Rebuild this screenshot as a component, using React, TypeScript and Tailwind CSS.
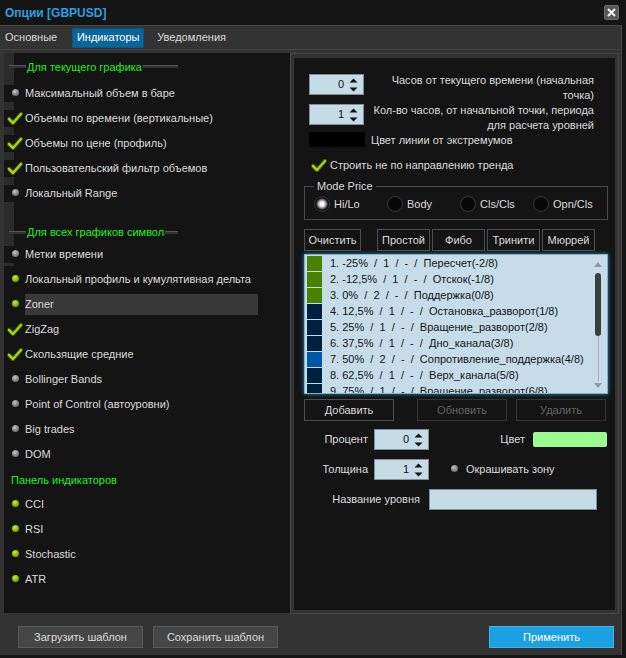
import clsx from 'clsx';

type Mark = 'check' | 'dot' | 'green';

interface Row {
  label: string;
  mark: Mark;
  active?: boolean;
}

const currentChart: Row[] = [
  { label: 'Максимальный объем в баре', mark: 'dot' },
  { label: 'Объемы по времени (вертикальные)', mark: 'check' },
  { label: 'Объемы по цене (профиль)', mark: 'check' },
  { label: 'Пользовательский фильтр объемов', mark: 'check' },
  { label: 'Локальный Range', mark: 'dot' },
];

const allCharts: Row[] = [
  { label: 'Метки времени', mark: 'dot' },
  { label: 'Локальный профиль и кумулятивная дельта', mark: 'green' },
  { label: 'Zoner', mark: 'green', active: true },
  { label: 'ZigZag', mark: 'check' },
  { label: 'Скользящие средние', mark: 'check' },
  { label: 'Bollinger Bands', mark: 'dot' },
  { label: 'Point of Control (автоуровни)', mark: 'dot' },
  { label: 'Big trades', mark: 'dot' },
  { label: 'DOM', mark: 'dot' },
];

const panel: Row[] = [
  { label: 'CCI', mark: 'green' },
  { label: 'RSI', mark: 'green' },
  { label: 'Stochastic', mark: 'green' },
  { label: 'ATR', mark: 'green' },
];

const levels = [
  { text: '1. -25%  /  1  /  -  /  Пересчет(-2/8)', color: 'bg-[#478200]' },
  { text: '2. -12,5%  /  1  /  -  /  Отскок(-1/8)', color: 'bg-[#478200]' },
  { text: '3. 0%  /  2  /  -  /  Поддержка(0/8)', color: 'bg-[#478200]' },
  { text: '4. 12,5%  /  1  /  -  /  Остановка_разворот(1/8)', color: 'bg-[#00203f]' },
  { text: '5. 25%  /  1  /  -  /  Вращение_разворот(2/8)', color: 'bg-[#00203f]' },
  { text: '6. 37,5%  /  1  /  -  /  Дно_канала(3/8)', color: 'bg-[#00203f]' },
  { text: '7. 50%  /  2  /  -  /  Сопротивление_поддержка(4/8)', color: 'bg-[#0057a8]' },
  { text: '8. 62,5%  /  1  /  -  /  Верх_канала(5/8)', color: 'bg-[#00203f]' },
  { text: '9. 75%  /  1  /  -  /  Вращение_разворот(6/8)', color: 'bg-[#00203f]' },
];

function Check() {
  return (
    <svg width="16" height="13" viewBox="0 0 16 13">
      <path d="M2 7 L6 11 L14 2" fill="none" stroke="#2f3d00" strokeWidth="4.5" strokeLinecap="round" strokeLinejoin="round" />
      <path d="M2 7 L6 11 L14 2" fill="none" stroke="#a5d40a" strokeWidth="2.6" strokeLinecap="round" strokeLinejoin="round" />
    </svg>
  );
}

function Dot({ green }: { green?: boolean }) {
  return (
    <span
      className={clsx(
        'mb-[2px] block h-[7px] w-[7px] rounded-full',
        green
          ? 'bg-[radial-gradient(circle_at_40%_35%,#c4ee3a_0%,#8cc400_45%,#4d7300_100%)]'
          : 'bg-[radial-gradient(circle_at_40%_35%,#c8c8c8_0%,#8c8c8c_45%,#4e4e4e_100%)]',
      )}
    />
  );
}

function MarkIcon({ mark }: { mark: Mark }) {
  return (
    <span className="flex w-[21px] shrink-0 items-center justify-center pl-[1px]">
      {mark === 'check' ? <Check /> : <Dot green={mark === 'green'} />}
    </span>
  );
}

function ItemRow({ row, strip }: { row: Row; strip?: boolean }) {
  return (
    <div
      className={clsx(
        'flex h-[25px] items-center pt-[1px]',
        strip && 'bg-[linear-gradient(to_right,#2b2b2b_10px,#141414_10px)]',
      )}
    >
      <div className="flex h-[17px] w-full items-center bg-[#141414]">
        <MarkIcon mark={row.mark} />
        <span
          className={clsx(
            'flex h-[21px] w-[233px] items-center whitespace-nowrap',
            row.active && 'bg-[#393939]',
          )}
        >
          {row.label}
        </span>
      </div>
    </div>
  );
}

function GroupHeader({ title, className }: { title: string; className?: string }) {
  return (
    <div className={clsx('flex bg-[linear-gradient(to_right,#2b2b2b_10px,#141414_10px)]', className)}>
      <div className="ml-[5px] flex w-[169px] items-center">
        <span className="h-[3px] w-[17px] shrink-0 border-t border-[#575757] bg-[#333]" />
        <span className="max-w-[139px] overflow-hidden whitespace-nowrap px-[1px] leading-[14px] text-[#22f022]">
          {title}
        </span>
        <span className="h-[3px] min-w-[13px] flex-1 border-t border-[#575757] bg-[#333]" />
      </div>
    </div>
  );
}

function Arrows() {
  return (
    <svg width="9" height="14" viewBox="0 0 9 14" className="ml-[5px] shrink-0">
      <path d="M0.5 4.5 L4.5 0.5 L8.5 4.5 Z" fill="#111" />
      <path d="M0.5 9.5 L8.5 9.5 L4.5 13.5 Z" fill="#111" />
    </svg>
  );
}

function Spin({ value, className }: { value: string; className?: string }) {
  return (
    <div
      className={clsx(
        'flex h-[21px] w-[55px] shrink-0 items-center justify-end border border-[#7d9099] bg-[#c5dbe6] pr-[5px] text-[#111]',
        className,
      )}
    >
      <span>{value}</span>
      <Arrows />
    </div>
  );
}

function Radio({ label, checked, className }: { label: string; checked?: boolean; className?: string }) {
  return (
    <div className={clsx('flex items-center', className)}>
      <span
        className={clsx(
          'block h-[16px] w-[16px] rounded-full border border-[#3a3a3a]',
          checked
            ? 'bg-[radial-gradient(circle,#ffffff_0%,#f0f0f0_22%,#8a8a8a_42%,#0c0c0c_62%)]'
            : 'bg-[#070707]',
        )}
      />
      <span className="ml-[4px]">{label}</span>
    </div>
  );
}

function DarkButton({ label, className, disabled }: { label: string; className?: string; disabled?: boolean }) {
  return (
    <div
      className={clsx(
        'flex h-[22px] shrink-0 items-center justify-center border bg-[#141414]',
        disabled ? 'border-[#343434] text-[#666]' : 'border-[#4e4e4e] text-[#dcdcdc]',
        className,
      )}
    >
      {label}
    </div>
  );
}

export default function App() {
  return (
    <div className="h-[658px] w-[626px] overflow-hidden bg-[#141414] font-['Liberation_Sans',Arial,sans-serif] text-[11px] text-[#dcdcdc]">
      {/* title bar */}
      <div className="flex h-[25px] items-center justify-between pl-[5px] pr-[7px]">
        <span className="text-[12px] font-bold text-[#2ea0e0]">Опции [GBPUSD]</span>
        <span className="flex h-[15px] w-[15px] items-center justify-center rounded-[2px] border border-[#6a6a6a] bg-[#575757]">
          <svg width="9" height="9" viewBox="0 0 9 9">
            <path d="M1 1 L8 8 M8 1 L1 8" stroke="#f2f2f2" strokeWidth="2" />
          </svg>
        </span>
      </div>

      <div className="h-[630px] w-[622px] border-r border-t border-[#474747] bg-[#333]">
        {/* tabs */}
        <div className="flex h-[24px] items-center border-b border-[#454545] pl-[5px] text-[11px]">
          <span className="mr-[15px]">Основные</span>
          <span className="flex h-[20px] w-[72px] items-center justify-center border border-[#0b5580] bg-[#0a6598] text-white">
            Индикаторы
          </span>
          <span className="ml-[13px]">Уведомления</span>
        </div>

        {/* body */}
        <div className="flex h-[567px] pl-[4px] pt-[3px]">
          {/* left panel */}
          <div className="h-[560px] w-[286px] bg-[#141414]">
            <GroupHeader title="Для текущего графика" className="h-[27px]" />
            {currentChart.map(r => (
              <ItemRow key={r.label} row={r} strip />
            ))}
            <GroupHeader title="Для всех графиков символа" className="h-[36px] items-start pt-[20px]" />
            {allCharts.map((r, i) => (
              <ItemRow key={r.label} row={r} strip={i === 0} />
            ))}
            <div className="flex h-[25px] items-center pl-[7px] pt-[3px] text-[#22f022]">Панель индикаторов</div>
            {panel.map(r => (
              <ItemRow key={r.label} row={r} />
            ))}
          </div>

          {/* right panel */}
          <div className="h-[561px] w-[329px] border border-[#474747] pb-[3px] pl-[3px] pr-[3px] pt-[4px]">
            <div className="flex h-full flex-col bg-[#141414]">
              <div className="mt-[15px] flex h-[30px]">
                <Spin value="0" className="ml-[15px] mt-[1px]" />
                <div className="flex-1 pr-[21px] text-right leading-[15px]">
                  Часов от текущего времени (начальная
                  <br />
                  точка)
                </div>
              </div>
              <div className="flex h-[29px]">
                <Spin value="1" className="ml-[15px] mt-[1px]" />
                <div className="flex-1 whitespace-nowrap pr-[21px] text-right leading-[15px]">
                  Кол-во часов, от начальной точки, периода
                  <br />
                  для расчета уровней
                </div>
              </div>
              <div className="flex h-[15px] items-center">
                <span className="ml-[15px] h-[15px] w-[56px] bg-black" />
                <span className="ml-[6px] pt-[2px]">Цвет линии от экстремумов</span>
              </div>
              <div className="mt-[10px] flex h-[16px] items-center pl-[17px]">
                <Check />
                <span className="ml-[3px]">Строить не по направлению тренда</span>
              </div>

              <fieldset className="ml-[10px] mt-[6px] h-[41px] w-[304px] border border-[#4a4a4a] px-[9px]">
                <legend className="px-[3px] leading-[14px]">Mode Price</legend>
                <div className="flex h-[16px] items-center mt-[3px]">
                  <Radio label="Hi/Lo" checked className="w-[73px]" />
                  <Radio label="Body" className="w-[73px]" />
                  <Radio label="Cls/Cls" className="w-[73px]" />
                  <Radio label="Opn/Cls" />
                </div>
              </fieldset>

              <div className="ml-[10px] mt-[9px] flex">
                <DarkButton label="Очистить" className="w-[57px]" />
                <DarkButton label="Простой" className="ml-[16px] w-[53px]" />
                <DarkButton label="Фибо" className="ml-[2px] w-[53px]" />
                <DarkButton label="Тринити" className="ml-[2px] w-[53px]" />
                <DarkButton label="Мюррей" className="ml-[2px] w-[53px]" />
              </div>

              {/* levels list */}
              <div className="ml-[10px] mt-[3px] flex h-[140px] w-[304px] overflow-hidden border border-[#79b3d0] bg-[#c6dce8] shadow-[0_0_4px_#2f86b4] text-[#141414]">
                <div className="flex-1 pl-[2px] pt-[1px]">
                  {levels.map(l => (
                    <div key={l.text} className="flex h-[16px] items-start">
                      <span className={clsx('h-[15px] w-[15px] shrink-0', l.color)} />
                      <span className="ml-[8px] whitespace-pre leading-[15px]">{l.text}</span>
                    </div>
                  ))}
                </div>
                <div className="flex w-[16px] flex-col items-center pr-[2px] pt-[7px]">
                  <svg width="8" height="5" viewBox="0 0 8 5">
                    <path d="M0 5 L4 0 L8 5 Z" fill="#8f9aa0" />
                  </svg>
                  <span className="mt-[6px] h-[63px] w-[6px] rounded-full bg-[#3d3d3d]" />
                  <span className="h-[45px] w-px bg-[#9fb3bd]" />
                  <svg width="8" height="5" viewBox="0 0 8 5" className="mt-[2px]">
                    <path d="M0 0 L8 0 L4 5 Z" fill="#8f9aa0" />
                  </svg>
                </div>
              </div>

              <div className="ml-[10px] mt-[5px] flex">
                <DarkButton label="Добавить" className="w-[90px]" />
                <DarkButton label="Обновить" disabled className="ml-[23px] w-[90px]" />
                <DarkButton label="Удалить" disabled className="ml-[9px] w-[90px]" />
              </div>

              <div className="mt-[8px] flex h-[21px] items-center">
                <span className="w-[74px] text-right">Процент</span>
                <Spin value="0" className="ml-[6px]" />
                <span className="ml-auto">Цвет</span>
                <span className="ml-[8px] mr-[8px] h-[15px] w-[74px] rounded-[2px] bg-[#9afb8f]" />
              </div>
              <div className="mt-[9px] flex h-[21px] items-center">
                <span className="w-[74px] text-right">Толщина</span>
                <Spin value="1" className="ml-[6px]" />
                <span className="mb-[2px] ml-[22px] h-[7px] w-[7px] rounded-full bg-[radial-gradient(circle_at_40%_35%,#c8c8c8_0%,#8c8c8c_45%,#4e4e4e_100%)]" />
                <span className="ml-[8px]">Окрашивать зону</span>
              </div>
              <div className="mt-[9px] flex h-[21px] items-center">
                <span className="w-[126px] text-right">Название уровня</span>
                <span className="ml-[9px] h-[21px] w-[168px] border border-[#7d9099] bg-[#c5dbe6]" />
              </div>
            </div>
          </div>
        </div>

        {/* footer */}
        <div className="flex pl-[18px] pr-[7px] pt-[9px]">
          <div className="flex h-[22px] w-[125px] items-center justify-center border border-[#5a5a5a] bg-[#464646]">
            Загрузить шаблон
          </div>
          <div className="ml-[10px] flex h-[22px] w-[125px] items-center justify-center border border-[#5a5a5a] bg-[#464646]">
            Сохранить шаблон
          </div>
          <div className="ml-auto flex h-[22px] w-[125px] items-center justify-center border border-[#3fb4f0] bg-[#1ba1e2] text-white">
            Применить
          </div>
        </div>
      </div>
    </div>
  );
}
